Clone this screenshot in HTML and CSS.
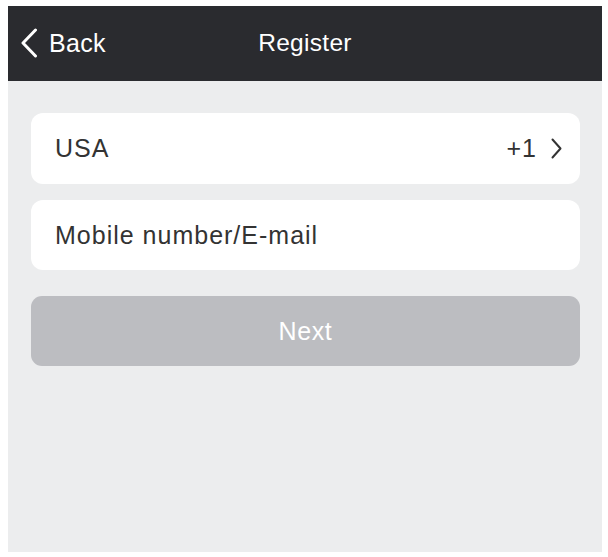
FILE: index.html
```html
<!DOCTYPE html>
<html lang="en">
<head>
<meta charset="utf-8">
<title>Register</title>
<link rel="stylesheet" href="styles.css">
</head>
<body>
<div class="screen">
  <header class="topbar">
    <a class="back" href="#">
      <svg class="back-icon" width="18" height="30" viewBox="0 0 18 30" aria-hidden="true">
        <polyline points="15.5,2 3,15 15.5,28" fill="none" stroke="#fff" stroke-width="3" stroke-linecap="round" stroke-linejoin="round"/>
      </svg>
      <span>Back</span>
    </a>
    <h1 class="title">Register</h1>
  </header>
  <main class="content">
    <div class="field field-country">
      <span class="label">USA</span>
      <span class="code">+1
        <svg class="chev" width="11" height="21" viewBox="0 0 11 21" aria-hidden="true">
          <polyline points="1.5,1.5 9.5,10.5 1.5,19.5" fill="none" stroke="#333" stroke-width="2" stroke-linecap="round" stroke-linejoin="round"/>
        </svg>
      </span>
    </div>
    <div class="field field-input">
      <span class="placeholder">Mobile number/E-mail</span>
    </div>
    <button class="next" type="button">Next</button>
  </main>
</div>
</body>
</html>
```

FILE: styles.css
```css
html, body {
  margin: 0;
  padding: 0;
  background: #ffffff;
}
body {
  padding: 6px 6px 5px 8px;
  font-family: "Liberation Sans", Arial, Helvetica, sans-serif;
}
.screen {
  width: 594px;
  height: 546px;
  background: #ecedee;
  display: flex;
  flex-direction: column;
}
.topbar {
  position: relative;
  height: 75px;
  flex: none;
  background: #2a2b2f;
  display: flex;
  align-items: center;
  justify-content: center;
}
.back {
  position: absolute;
  left: 12px;
  top: 22px;
  display: flex;
  align-items: center;
  gap: 11px;
  color: #ffffff;
  text-decoration: none;
  font-size: 25px;
  letter-spacing: 0.3px;
}
.back-icon {
  display: block;
}
.title {
  margin: 0;
  font-weight: normal;
  font-size: 24.5px;
  letter-spacing: 0.3px;
  color: #ffffff;
  margin-top: -2px;
}
.content {
  padding: 32px 22px 0 23px;
  display: flex;
  flex-direction: column;
}
.field {
  background: #ffffff;
  border-radius: 12px;
  display: flex;
  align-items: center;
  justify-content: space-between;
  padding: 0 18px 0 24px;
  font-size: 25px;
  letter-spacing: 1px;
  color: #333333;
}
.field-country {
  height: 71px;
}
.field-input {
  height: 70px;
  margin-top: 16px;
}
.code {
  display: flex;
  align-items: center;
  gap: 14px;
}
.chev {
  display: block;
}
.next {
  margin-top: 26px;
  height: 70px;
  border: none;
  border-radius: 11px;
  background: #bcbdc1;
  color: #ffffff;
  font-family: inherit;
  font-size: 25px;
  letter-spacing: 0.6px;
  padding: 0;
}
```
